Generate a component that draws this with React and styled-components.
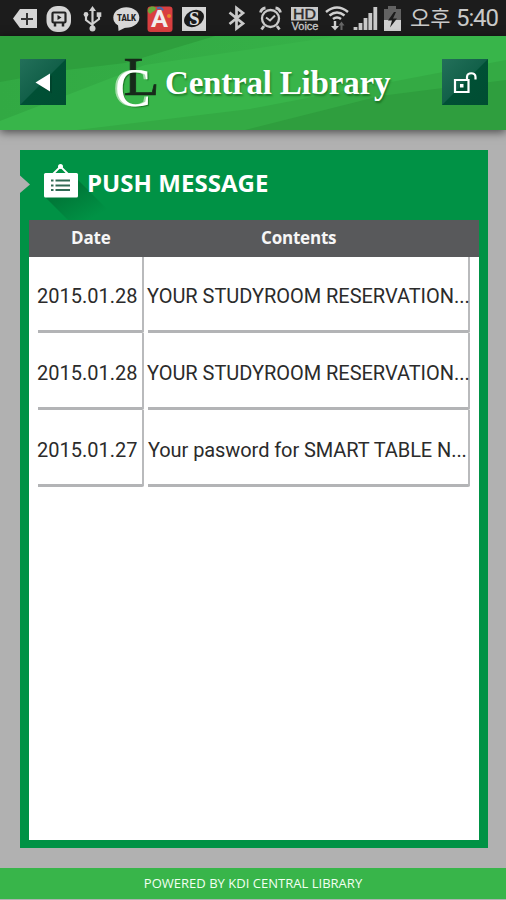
import React from 'react';
import styled, { createGlobalStyle } from 'styled-components';

const GlobalStyle = createGlobalStyle`
  * {
    box-sizing: border-box;
  }
  body {
    margin: 0;
    background: #b1b1b1;
  }
`;

const StyledScreen = styled.div`
  display: flex;
  flex-direction: column;
  width: 506px;
  height: 900px;
  overflow: hidden;
  background: #b1b1b1;
`;

const StyledStatusBar = styled.div`
  display: flex;
  flex: none;
  align-items: flex-start;
  height: 36px;
  background: #1c1c1c;
`;

const StyledStatusIcon = styled.svg`
  display: block;
  flex: none;
  height: 36px;
  width: ${props => props.$width}px;
  margin-left: ${props => props.$gap}px;
`;

const StyledClock = styled.div`
  display: flex;
  margin-left: 8px;
  line-height: 36px;
  color: #c9c9c9;
  white-space: nowrap;
`;

const StyledMeridiem = styled.span`
  width: 46px;
  font-family: 'Noto Sans CJK KR', sans-serif;
  font-size: 22px;
  line-height: 33px;
`;

const StyledTime = styled.span`
  font-family: Roboto, sans-serif;
  font-size: 24px;
  letter-spacing: -1.1px;
`;

const StyledHeader = styled.header`
  position: relative;
  display: flex;
  flex: none;
  align-items: center;
  justify-content: space-between;
  height: 94px;
  padding: 0 18px 0 20px;
  background: #38b54a;
  box-shadow: 0 2px 9px rgba(0, 0, 0, 0.6);
`;

const StyledRays = styled.svg`
  position: absolute;
  top: 0;
  left: 0;
`;

const StyledButton = styled.button`
  position: relative;
  width: 46px;
  height: 46px;
  margin-bottom: 2px;
  padding: 0;
  border: 0;
  background: linear-gradient(135deg, #23705a 0%, #126049 49%, #005035 51%, #004d32 100%);
`;

const StyledButtonIcon = styled.svg`
  display: block;
`;

const StyledBrand = styled.div`
  position: relative;
  display: flex;
  align-items: center;
  width: 278px;
  height: 60px;
`;

const StyledLogo = styled.svg`
  display: block;
  flex: none;
  overflow: visible;
`;

const StyledLogoFront = styled.text`
  text-shadow: -2px 0 0 #a5dcab, 1px 1px 1px rgba(0, 60, 0, 0.5);
`;

const StyledBrandName = styled.h1`
  margin: 0 0 0 4px;
  font-family: 'Liberation Serif', serif;
  font-size: 33px;
  font-weight: bold;
  line-height: 54px;
  letter-spacing: -0.2px;
  color: #fff;
  text-shadow: 1px 2px 2px rgba(0, 60, 0, 0.45);
  white-space: nowrap;
`;

const StyledPanel = styled.main`
  display: flex;
  flex: none;
  flex-direction: column;
  width: 468px;
  height: 698px;
  margin: 20px 0 0 20px;
  padding: 0 9px 8px;
  background: #009245;
`;

const StyledPanelTitle = styled.div`
  display: flex;
  flex: none;
  height: 70px;
  margin-left: -9px;
`;

const StyledTitleIcon = styled.svg`
  display: block;
  flex: none;
  overflow: visible;
`;

const StyledTitleText = styled.h2`
  position: relative;
  margin: 0;
  font-family: 'Open Sans', 'Noto Sans', sans-serif;
  font-size: 24px;
  font-weight: 700;
  line-height: 66px;
  letter-spacing: 0.05px;
  color: #fff;
  white-space: nowrap;
`;

const StyledTable = styled.div`
  flex: 1;
  background: #fff;
`;

const StyledTableHead = styled.div`
  position: relative;
  display: flex;
  height: 37px;
  background: #58595b;
`;

const StyledHeadCell = styled.div`
  width: ${props => props.$width}px;
  padding-left: ${props => props.$indent}px;
  font-family: 'Open Sans', 'Noto Sans', sans-serif;
  font-size: 17px;
  font-weight: 700;
  line-height: 35px;
  letter-spacing: -0.2px;
  color: #f6f6f6;
`;

const StyledRow = styled.div`
  display: flex;
  gap: 4px;
  height: 77px;
  padding-left: 9px;

  &:first-child {
    height: 76px;
  }
`;

const StyledCell = styled.div`
  display: flex;
  align-items: center;
  width: ${props => props.$width}px;
  padding-left: ${props => props.$indent || 0}px;
  padding-top: 5px;
  border-right: 2px solid #b9babc;
  border-bottom: 3px solid #b3b4b6;
  border-radius: 0 0 2px 0;
  font-family: Roboto, sans-serif;
  font-size: 20px;
  letter-spacing: ${props => props.$spacing}px;
  color: #2b2b2b;
  white-space: nowrap;
`;

const StyledCellText = styled.span`
  margin-left: -1px;
`;

const StyledFooter = styled.footer`
  flex: none;
  height: 31px;
  margin-top: 20px;
  background: #38b54a;
  font-family: 'Open Sans', 'Noto Sans', sans-serif;
  font-size: 13px;
  line-height: 30px;
  letter-spacing: 0.02px;
  text-align: center;
  color: #f2fff2;
`;

const messages = [
  { id: 1, date: '2015.01.28', text: 'YOUR STUDYROOM RESERVATION...', indent: 0, spacing: -0.03 },
  { id: 2, date: '2015.01.28', text: 'YOUR STUDYROOM RESERVATION...', indent: 0, spacing: -0.03 },
  { id: 3, date: '2015.01.27', text: 'Your pasword for SMART TABLE N...', indent: 1, spacing: -0.08 },
];

const StatusIcon = ({ x, width, gap, children }) => (
  <StyledStatusIcon $width={width} $gap={gap} viewBox={`${x} 0 ${width} 36`} fill="none">
    {children}
  </StyledStatusIcon>
);

const StatusBar = () => (
  <StyledStatusBar>
    <StatusIcon x={13} width={25} gap={13}>
      <path d="M20 9h17v19H20l-7-9.5z" fill="#d5d5d5" />
      <path d="M27 13v12M21 19h12" stroke="#333" strokeWidth="2" />
    </StatusIcon>
    <StatusIcon x={46} width={26} gap={8}>
      <rect x="46.5" y="6" width="24.5" height="26" rx="11" fill="#d5d5d5" />
      <rect x="52.5" y="12.5" width="13" height="10" rx="1" stroke="#222" strokeWidth="2.2" />
      <path d="M57.5 15v5l4-2.5z" fill="#222" />
      <path d="M55 23v3.500M63 23v3.500" stroke="#222" strokeWidth="2.500" />
    </StatusIcon>
    <StatusIcon x={83} width={20} gap={11}>
      <path d="M92.5 10v18M86 16v4l6.5 5M99 16v3l-6.5 5" stroke="#d0d0d0" strokeWidth="2.2" />
      <path d="M92.5 6l3.5 5h-7z" fill="#d0d0d0" />
      <circle cx="92.5" cy="28.5" r="3" fill="#d0d0d0" />
      <circle cx="86" cy="14.5" r="2.4" fill="#d0d0d0" />
      <rect x="96.7" y="12.3" width="4.6" height="4.6" fill="#d0d0d0" />
    </StatusIcon>
    <StatusIcon x={113} width={27} gap={10}>
      <ellipse cx="126.3" cy="17.5" rx="13" ry="10.3" fill="#d8d8d8" />
      <path d="M118 24l.5 7 8-4z" fill="#d8d8d8" />
      <text x="117" y="20.5" textLength="19" lengthAdjust="spacingAndGlyphs" fontFamily="Roboto, sans-serif" fontWeight="900" fontSize="8.5" fill="#222">TALK</text>
    </StatusIcon>
    <StatusIcon x={147} width={26} gap={7}>
      <rect x="147.5" y="6.5" width="25" height="25.5" rx="3" fill="#d93f40" />
      <path d="M148 12c-1-3 2-6 5-5.500 3 0 4 3 1 4.500l-4 3z" fill="#69a83b" />
      <circle cx="169" cy="16" r="2" fill="#e58a2d" />
      <path d="M157 8.500q4-2 6 2" stroke="#476bb0" strokeWidth="2" />
      <text x="151" y="27" fontFamily="Roboto, sans-serif" fontWeight="700" fontSize="24" textLength="17" lengthAdjust="spacingAndGlyphs" fill="#f0eded">A</text>
    </StatusIcon>
    <StatusIcon x={181} width={26} gap={8}>
      <rect x="182" y="7" width="24" height="24" fill="#d5d5d5" />
      <ellipse cx="194" cy="18.500" rx="10.500" ry="8" transform="rotate(-30 194 18.500)" fill="#1b1b1b" />
      <text x="189" y="25" fontFamily="Liberation Serif, serif" fontWeight="700" fontSize="19" fill="#ddd">S</text>
    </StatusIcon>
    <StatusIcon x={228} width={18} gap={21}>
      <path d="M229.500 12.500L243 23.500l-6.500 5V8l6.500 5-13.500 11" stroke="#c9c9c9" strokeWidth="2.700" />
    </StatusIcon>
    <StatusIcon x={259} width={24} gap={13}>
      <circle cx="270.500" cy="18.500" r="8.500" stroke="#c9c9c9" strokeWidth="2.300" />
      <path d="M260.500 12.500q1-4 5-4.500M280.500 12.500q-1-4-5-4.500M264 26l-2.500 3.500M277 26l2.500 3.500" stroke="#c9c9c9" strokeWidth="2.800" />
      <path d="M266 17.500l4 3 5-5" stroke="#c9c9c9" strokeWidth="2" />
    </StatusIcon>
    <StatusIcon x={290} width={29} gap={7}>
      <rect x="291" y="7" width="27" height="13.500" fill="#c9c9c9" />
      <text x="293" y="18.500" textLength="23" lengthAdjust="spacingAndGlyphs" fontFamily="Liberation Sans, sans-serif" fontSize="14" fill="#292929" stroke="#292929" strokeWidth=".4">HD</text>
      <text x="291.500" y="30" textLength="27" lengthAdjust="spacingAndGlyphs" fontFamily="Liberation Sans, sans-serif" fontSize="10.500" fill="#c9c9c9" stroke="#c9c9c9" strokeWidth=".3">Voice</text>
    </StatusIcon>
    <StatusIcon x={324} width={26} gap={5}>
      <path d="M326 12q11-9 22 0M329.500 15.500q7.500-6 15 0M333 19q4-3 8 0" stroke="#d0d0d0" strokeWidth="2.500" />
      <path d="M335 21v6" stroke="#d0d0d0" strokeWidth="2.400" />
      <path d="M331 26h8l-4 4.500z" fill="#d0d0d0" />
      <path d="M341.500 30v-5" stroke="#666" strokeWidth="2" />
      <path d="M338.500 25.500h6l-3-4z" fill="#666" />
    </StatusIcon>
    <StatusIcon x={353} width={25} gap={3}>
      <path d="M355.500 30v-3M360.500 30v-7M365.500 30V18M370.300 30V13M375.300 30V7" stroke="#c9c9c9" strokeWidth="3.800" />
    </StatusIcon>
    <StatusIcon x={384} width={18} gap={6}>
      <path d="M384 9h4V6h8v3h5v12h-17z" fill="#626262" />
      <rect x="384" y="20" width="17" height="11" fill="#d0d0d0" />
      <path d="M394 12l-6 8.500h4l-2 7 7-9h-4l3-6.500z" fill="#1c1c1c" />
    </StatusIcon>
    <StyledClock>
      <StyledMeridiem>오후</StyledMeridiem>
      <StyledTime>5:40</StyledTime>
    </StyledClock>
  </StyledStatusBar>
);

const Header = () => (
  <StyledHeader>
    <StyledRays width="506" height="94" viewBox="0 0 506 94">
      <defs>
        <linearGradient id="ray" x1="0" y1="0" x2="1" y2="0">
          <stop offset="0" stopColor="#32a943" />
          <stop offset="1" stopColor="#36b148" />
        </linearGradient>
      </defs>
      <path d="M0 0h340L145 29 0 85z" fill="url(#ray)" />
      <path d="M0 0h215L125 27 66 34 0 46z" fill="#2e9f3d" />
      <path d="M506 24L370 50 250 73 77 94h429z" fill="#34aa44" />
      <path d="M506 44L380 60 245 94h261z" fill="#2f9e3e" />
    </StyledRays>
    <StyledButton aria-label="Back">
      <StyledButtonIcon width="46" height="46" viewBox="0 0 46 46">
        <path d="M17 24.500l15-8v18z" fill="#003a25" opacity=".5" />
        <path d="M15.500 23.500l14.500-9v18z" fill="#fff" />
      </StyledButtonIcon>
    </StyledButton>
    <StyledBrand>
      <StyledLogo width="46" height="60" viewBox="0 0 46 60">
        <text x="8.500" y="42" fontFamily="Liberation Serif, serif" fontSize="54" textLength="36" lengthAdjust="spacingAndGlyphs" fill="#17291a" stroke="#17291a" strokeWidth=".7">L</text>
        <StyledLogoFront x="0" y="53" fontFamily="Liberation Serif, serif" fontSize="54" textLength="36" lengthAdjust="spacingAndGlyphs" fill="#fff">C</StyledLogoFront>
      </StyledLogo>
      <StyledBrandName>Central Library</StyledBrandName>
    </StyledBrand>
    <StyledButton aria-label="Log in">
      <StyledButtonIcon width="46" height="46" viewBox="0 0 46 46" fill="none">
        <path d="M13 21h13.500v12H13z" stroke="#fff" strokeWidth="2.200" />
        <path d="M25 20.500V18c0-5 8.500-5 8.500 0v2.500" stroke="#fff" strokeWidth="2.200" />
        <rect x="18" y="25" width="3.500" height="3.500" fill="#fff" />
      </StyledButtonIcon>
    </StyledButton>
  </StyledHeader>
);

const PanelTitle = () => (
  <StyledPanelTitle>
    <StyledTitleIcon width="67" height="70" viewBox="0 0 67 70">
      <defs>
        <linearGradient id="shade" x1="0" y1="0" x2="1" y2="1">
          <stop offset=".3" stopColor="#007838" />
          <stop offset=".8" stopColor="#009245" />
        </linearGradient>
      </defs>
      <path d="M26 48l22 22h50L58 30z" fill="url(#shade)" />
      <path d="M0 25.500l10 9L0 43z" fill="#b1b1b1" />
      <path d="M33 24l7.500-7.500L48 24" fill="none" stroke="#fff" strokeWidth="1.800" />
      <circle cx="40.500" cy="16.500" r="2.500" fill="#fff" />
      <rect x="24" y="23" width="34" height="24.500" rx="1.500" fill="#fff" />
      <path d="M31 30.500h2.500M31 35.500h2.500M31 40h2.500M35.500 30.500H50M35.500 35.500H50M35.500 40H50" stroke="#316a55" strokeWidth="2" />
    </StyledTitleIcon>
    <StyledTitleText>PUSH MESSAGE</StyledTitleText>
  </StyledPanelTitle>
);

const MessageTable = () => (
  <StyledTable>
    <StyledTableHead>
      <StyledHeadCell $width={115} $indent={42}>Date</StyledHeadCell>
      <StyledHeadCell $width={335} $indent={117}>Contents</StyledHeadCell>
    </StyledTableHead>
    <div>
      {messages.map(message => (
        <StyledRow key={message.id}>
          <StyledCell $width={106} $spacing={0}>
            <StyledCellText>{message.date}</StyledCellText>
          </StyledCell>
          <StyledCell $width={322} $indent={message.indent} $spacing={message.spacing}>
            <StyledCellText>{message.text}</StyledCellText>
          </StyledCell>
        </StyledRow>
      ))}
    </div>
  </StyledTable>
);

const App = () => (
  <StyledScreen>
    <GlobalStyle />
    <StatusBar />
    <Header />
    <StyledPanel>
      <PanelTitle />
      <MessageTable />
    </StyledPanel>
    <StyledFooter>POWERED BY KDI CENTRAL LIBRARY</StyledFooter>
  </StyledScreen>
);

export default App;
